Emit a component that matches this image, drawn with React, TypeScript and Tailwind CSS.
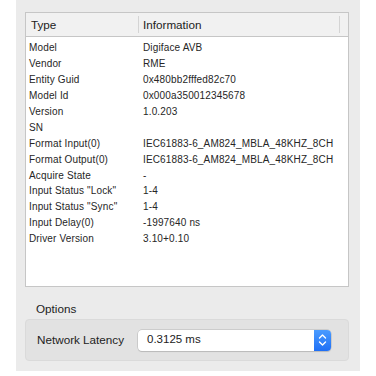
import React from "react";

const rows: [string, string][] = [
  ["Model", "Digiface AVB"],
  ["Vendor", "RME"],
  ["Entity Guid", "0x480bb2fffed82c70"],
  ["Model Id", "0x000a350012345678"],
  ["Version", "1.0.203"],
  ["SN", ""],
  ["Format Input(0)", "IEC61883-6_AM824_MBLA_48KHZ_8CH"],
  ["Format Output(0)", "IEC61883-6_AM824_MBLA_48KHZ_8CH"],
  ["Acquire State", "-"],
  ['Input Status "Lock"', "1-4"],
  ['Input Status "Sync"', "1-4"],
  ["Input Delay(0)", "-1997640 ns"],
  ["Driver Version", "3.10+0.10"],
];

const Stepper = () => (
  <div className="w-[17px] h-full rounded-r-[4px] bg-gradient-to-b from-[#4a9bff] to-[#1f6ff5] flex items-center justify-center">
    <svg width="9" height="14" viewBox="0 0 9 14" fill="none">
      <path d="M1.5 5 L4.5 2 L7.5 5" stroke="white" strokeWidth="1.4" strokeLinecap="round" strokeLinejoin="round" />
      <path d="M1.5 9 L4.5 12 L7.5 9" stroke="white" strokeWidth="1.4" strokeLinecap="round" strokeLinejoin="round" />
    </svg>
  </div>
);

export default function App() {
  return (
    <div
      className="w-[376px] h-[376px] bg-white text-[#262626]"
      style={{ fontFamily: '"Liberation Sans", Arial, sans-serif' }}
    >
      <div className="ml-[16px] w-[344px] h-[371px] bg-[#ebebeb] pt-[12px] pl-[9px] pr-[11px]">
        {/* info table */}
        <div className="h-[275px] border border-[#c6c6c6] bg-white flex flex-col">
          <div className="h-[24px] bg-[#f1f1f1] border-b border-[#c6c6c6] flex items-center text-[11.7px] text-[#222]">
            <div className="w-[112px] pl-[5px]">Type</div>
            <div className="w-px h-[17px] bg-[#d4d4d4]" />
            <div className="flex-1 pl-[4px]">Information</div>
            <div className="w-px h-[17px] bg-[#d4d4d4] mr-[8px]" />
          </div>
          <div className="pt-[3px] text-[10px] tracking-[0.15px]">
            {rows.map(([k, v]) => (
              <div key={k} className="h-[15.9px] flex items-center">
                <div className="w-[117px] pl-[3px]">{k}</div>
                <div className="flex-1">{v}</div>
              </div>
            ))}
          </div>
        </div>

        {/* options */}
        <div className="mt-[15px] pl-[11px] text-[11.7px] leading-[14px] text-[#222]">Options</div>
        <div className="mt-[3px] h-[42px] rounded-[4px] bg-[#e2e2e2] border border-[#dadada] flex items-center pl-[11px] pr-[17px]">
          <div className="w-[101px] text-[11.7px] text-[#222]">Network Latency</div>
          <div className="flex-1 h-[21px] flex rounded-[4px] bg-white shadow-[0_0_0_0.5px_#b5b5b5,0_1px_1px_rgba(0,0,0,0.15)]">
            <div className="flex-1 pl-[9px] flex items-center text-[11.5px] text-[#222]">0.3125 ms</div>
            <Stepper />
          </div>
        </div>
      </div>
    </div>
  );
}
